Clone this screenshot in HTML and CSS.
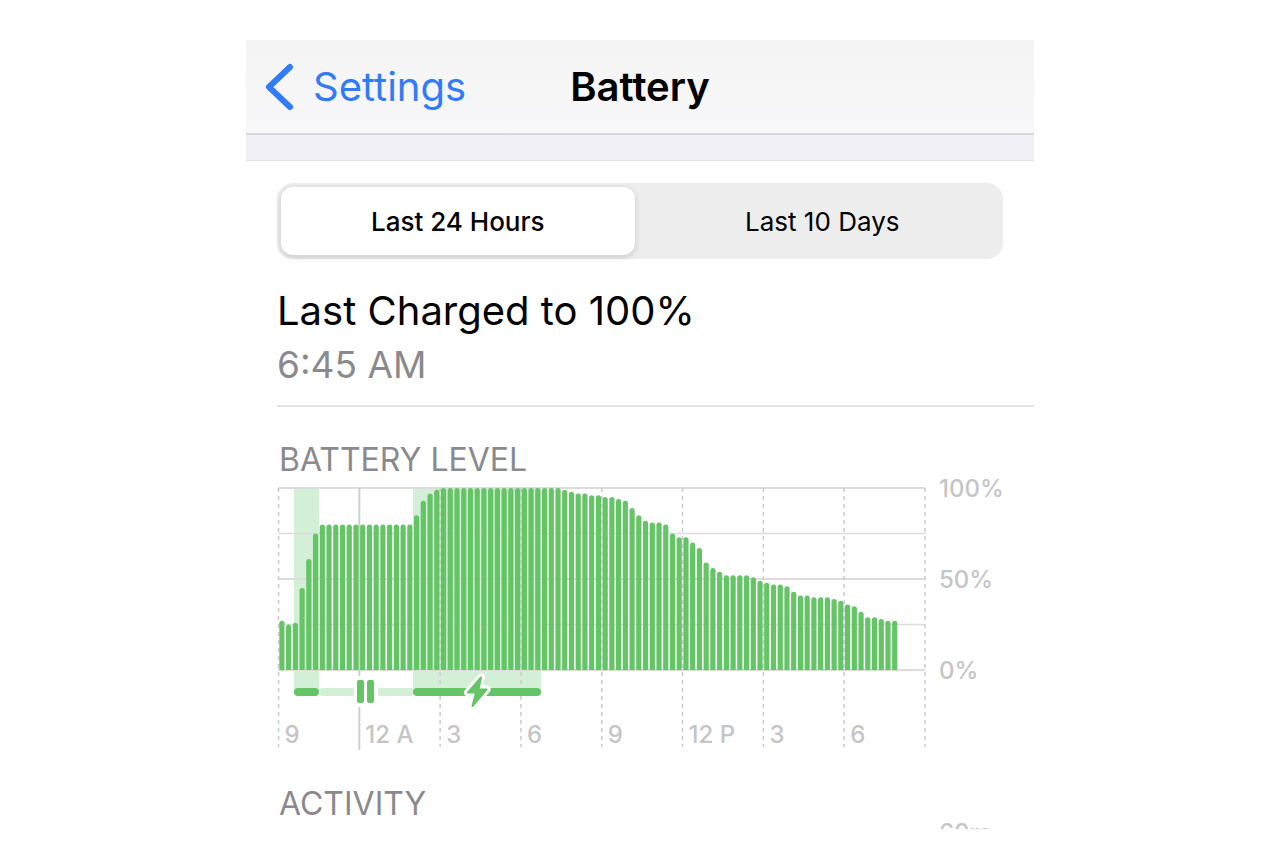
FILE: index.html
```
<!DOCTYPE html>
<html lang="en">
<head>
  <meta charset="utf-8">
  <meta name="viewport" content="width=device-width">
  <title>Battery</title>
  <link rel="stylesheet" href="styles.css">
</head>
<body>
  <main class="screen">
    <!-- Navigation bar -->
    <header class="nav-bar">
      <a class="back" href="#settings">
        <svg class="chevron" viewBox="0 0 30 48" aria-hidden="true">
          <path d="M26 4L5 24l21 20"/>
        </svg>
        Settings
      </a>
      <h1>Battery</h1>
    </header>
    <div class="spacer"></div>

    <!-- Period switch -->
    <div class="segmented">
      <button type="button" class="segment selected" aria-pressed="true">Last 24 Hours</button>
      <button type="button" class="segment" aria-pressed="false">Last 10 Days</button>
    </div>

    <section class="last-charge">
      <h2>Last Charged to 100%</h2>
      <p>6:45 AM</p>
    </section>

    <section class="level">
      <h3>BATTERY LEVEL</h3>
      <svg class="chart" viewBox="0 0 757 280" role="img" aria-label="Battery level over the last 24 hours">
        <!-- Charging periods -->
        <rect class="charging" x="17" y="12" width="25" height="203"/>
        <rect class="charging" x="136" y="12" width="128" height="203"/>

        <!-- Grid -->
        <g id="grid"></g>
        <g id="bars"></g>

        <!-- Charging strip -->
        <rect class="fill" x="17" y="212" width="25" height="8" rx="4"/>
        <rect class="paused" x="43" y="212" width="34" height="8" rx="2"/>
        <rect class="paused" x="101" y="212" width="35" height="8" rx="2"/>
        <rect class="fill" x="136" y="212" width="128" height="8" rx="4"/>
        <rect class="fill" x="80" y="204" width="7" height="23" rx="2"/>
        <rect class="fill" x="90" y="204" width="7" height="23" rx="2"/>
        <path class="bolt-edge" d="M204 201.500L191 216.500h8l-3.500 13.500L209.500 213.500h-8z"/>
        <path class="bolt" d="M204 201.500L191 216.500h8l-3.500 13.500L209.500 213.500h-8z"/>

        <g class="axis">
          <text x="662" y="21">100%</text>
          <text x="662" y="112">50%</text>
          <text x="662" y="203">0%</text>
        </g>
        <g class="axis" id="hours"></g>
      </svg>
    </section>

    <section class="activity">
      <h3>ACTIVITY</h3>
      <span class="minutes">60m</span>
    </section>
  </main>

  <script>
    var svgNS = "http://www.w3.org/2000/svg";
    var left = 1.5, right = 648, top0 = 12, bottom = 194;

    // one reading every 15 minutes
    var levels = [
      27, 25, 26, 45, 61, 75, 80, 80, 80, 80, 80, 80,
      80, 80, 80, 80, 80, 80, 80, 80, 85, 93, 97, 99,
      100, 100, 100, 100, 100, 100, 100, 100, 100, 100, 100, 100,
      100, 100, 100, 100, 100, 100, 99, 98, 97, 97, 96, 96,
      95, 95, 94, 93, 89, 85, 82, 81, 81, 80, 75, 73,
      73, 70, 67, 59, 56, 54, 52, 52, 52, 52, 51, 49,
      48, 47, 47, 46, 43, 41, 41, 40, 40, 40, 39, 38,
      36, 35, 32, 29, 29, 28, 27, 27
    ];
    var hours = ["9", "12 A", "3", "6", "9", "12 P", "3", "6"];

    function addPath(parent, className, d) {
      var path = document.createElementNS(svgNS, "path");
      path.setAttribute("class", className);
      path.setAttribute("d", d);
      document.getElementById(parent).appendChild(path);
    }

    for (var i = 0; i <= 4; i++) {
      var y = top0 + i * (bottom - top0) / 4;
      addPath("grid", i % 2 ? "line quarter" : "line", "M" + left + " " + y + "H" + right);
    }

    for (var i = 0; i <= 8; i++) {
      var x = left + i * (right - left) / 8;
      if (hours[i] === "12 A") {
        // midnight is solid, with room left for the pause icon
        addPath("grid", "line midnight", "M" + x + " " + top0 + "V200M" + x + " 231V274");
      } else {
        addPath("grid", "line dashed", "M" + x + " " + top0 + "V271");
      }
      if (hours[i]) {
        var label = document.createElementNS(svgNS, "text");
        label.setAttribute("x", x + 6);
        label.setAttribute("y", 267);
        label.textContent = hours[i];
        document.getElementById("hours").appendChild(label);
      }
    }

    var slot = (right - left) / 96;
    levels.forEach(function(level, i) {
      var x = left + i * slot + 0.8;
      var y = bottom - level * (bottom - top0) / 100;
      addPath("bars", "fill", "M" + x + " " + bottom + "V" + (y + 2.6) +
        "a2.6 2.6 0 0 1 5.2 0V" + bottom + "z");
    });
  </script>
</body>
</html>
```
FILE: styles.css
```
* {
  padding: 0;
  margin: 0;
  box-sizing: border-box;
}

body {
  background-color: #fff;
  font-family: Inter, "Liberation Sans", sans-serif;
  color: #000;
  height: 100vh;
  padding: 40px 16px 18px;
}

.screen {
  max-width: 788px;
  height: 100%;
  margin: 0 auto;
  overflow: hidden;
}

/* Navigation bar */
.nav-bar {
  display: grid;
  grid-template-columns: 1fr auto 1fr;
  align-items: center;
  height: 95px;
  padding: 0 18px;
  background: linear-gradient(#f4f4f4, #f8f8fa);
  border-bottom: 2px solid #d8d8db;
}

.back {
  display: flex;
  align-items: center;
  gap: 19px;
  font-size: 40px;
  color: #327bf7;
  text-decoration: none;
}

.chevron {
  width: 30px;
  height: 48px;
  fill: none;
  stroke: #327bf7;
  stroke-width: 6;
  stroke-linecap: round;
  stroke-linejoin: round;
}

.nav-bar h1 {
  font-size: 40px;
  font-weight: 600;
}

.spacer {
  height: 26px;
  background-color: #f0f0f6;
  border-bottom: 1px solid #e4e4e8;
}

/* Period switch */
.segmented {
  display: flex;
  gap: 11px;
  height: 76px;
  margin: 22px 31px 0;
  padding: 4px;
  border-radius: 16px;
  background-color: #ededed;
}

.segment {
  flex: 1;
  border: none;
  border-radius: 12px;
  background: none;
  font-family: inherit;
  font-size: 26px;
  color: #000;
  cursor: pointer;
}

.segment.selected {
  background-color: #fff;
  font-weight: 500;
  box-shadow: 0 2px 6px rgba(0, 0, 0, 0.16);
}

/* Last charge */
.last-charge {
  height: 148px;
  margin-left: 31px;
  padding-top: 24px;
  border-bottom: 2px solid #e4e4e6;
}

.last-charge h2 {
  font-size: 40px;
  font-weight: 400;
  line-height: 56px;
}

.last-charge p {
  font-size: 37px;
  line-height: 52px;
  color: #8a8a8e;
}

h3 {
  padding-left: 2px;
  font-size: 32px;
  font-weight: 400;
  line-height: 40px;
  color: #8a8a8e;
}

/* Battery level chart */
.level {
  margin-left: 31px;
  padding-top: 33px;
}

.chart {
  display: block;
  width: 100%;
  margin-top: -4px;
  overflow: visible;
}

.fill {
  fill: #65c466;
}

.charging,
.paused {
  fill: #d3efd6;
}

.line {
  fill: none;
  stroke: #dcdcde;
  stroke-width: 2;
}

.quarter {
  stroke-width: 1.5;
}

.dashed {
  stroke: #cbcbcf;
  stroke-width: 1.5;
  stroke-dasharray: 4 4;
}

.midnight {
  stroke: #cfcfd2;
}

.bolt {
  fill: #65c466;
  stroke: #65c466;
  stroke-width: 2;
  stroke-linejoin: round;
}

.bolt-edge {
  fill: #fff;
  stroke: #fff;
  stroke-width: 8;
  stroke-linejoin: round;
}

.axis,
.minutes {
  font-size: 24px;
  font-weight: 500;
  fill: #c5c5c7;
  color: #c5c5c7;
}

/* Activity */
.activity {
  display: grid;
  grid-template-columns: 662px 1fr;
  margin-left: 31px;
  padding-top: 28px;
}

.minutes {
  padding-top: 34px;
}
```
